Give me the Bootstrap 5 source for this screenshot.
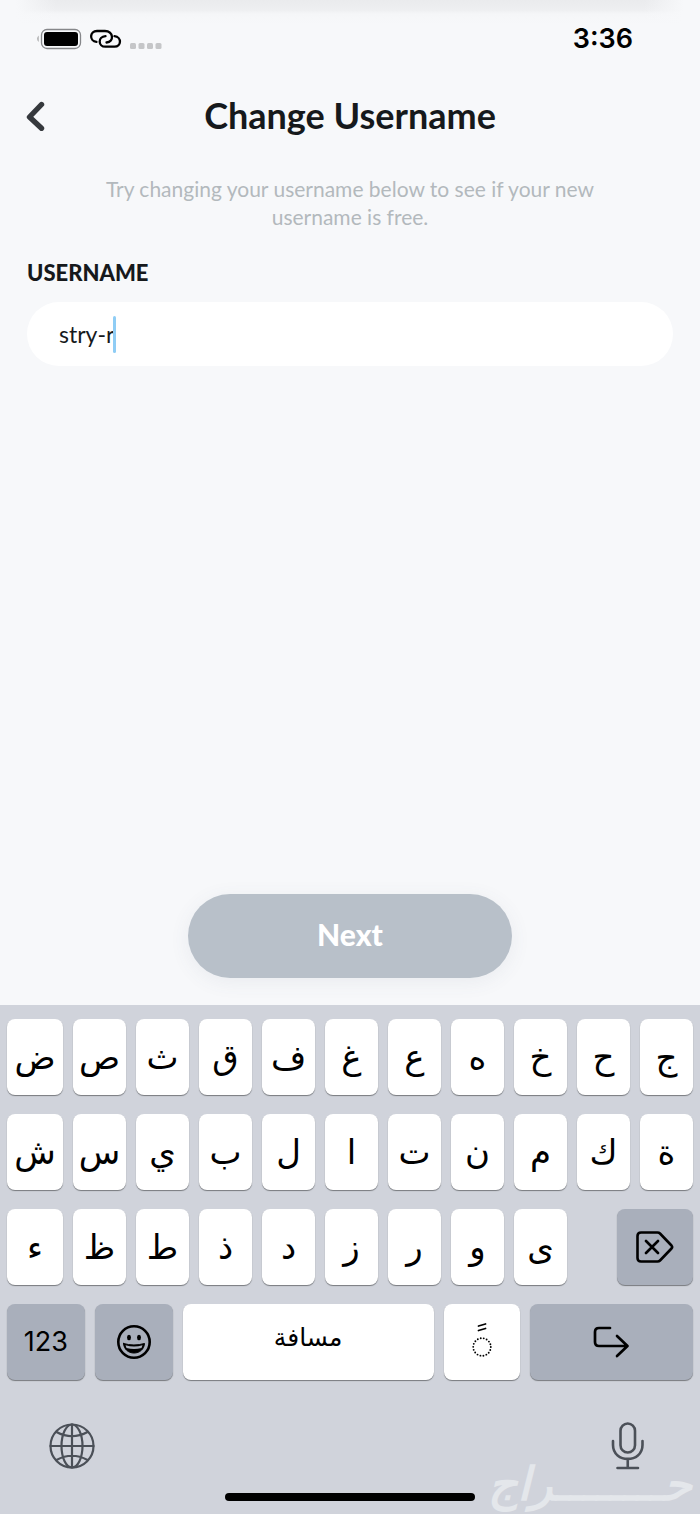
<!DOCTYPE html>
<html lang="en">
<head>
<meta charset="utf-8">
<meta name="viewport" content="width=device-width, initial-scale=1">
<title>Change Username</title>
<link href="https://cdn.jsdelivr.net/npm/bootstrap@5.3.0/dist/css/bootstrap.min.css" rel="stylesheet">
<style>
  body { background: #f7f8fa; color: #16191c; font-family: Lato, "Liberation Sans", sans-serif; }
  svg { display: block; fill: none; stroke: currentColor; stroke-linecap: round; stroke-linejoin: round; }
  .status-bar { height: 76px; padding: 2px 67px 0 36px; color: #000; background: linear-gradient(90deg, #f7f8fa 16px, transparent 56px, transparent calc(100% - 56px), #f7f8fa calc(100% - 16px)), linear-gradient(#eaebed 0, #eeeff1 10px, #f5f6f8 14px, #f7f8fa 24px); }
  .clock { font: 600 27px/32px Inter, sans-serif; }
  .title-bar { height: 80px; padding: 0 24px 2px; }
  .title-bar h1 { font-size: 36px; line-height: 40px; font-weight: 700; }
  .back-btn { left: 24px; color: #36393d; }
  .hint { padding: 19px 90px 0; font-size: 21px; line-height: 28px; color: #b3b9bd; }
  .field { padding: 28px 27px 0; }
  .field label { margin-bottom: 15px; font-size: 22px; line-height: 28px; font-weight: 900; }
  .field input, .field input:focus { height: 64px; padding: 0 32px; border: 0; border-radius: 32px; background: #fff; color: #16191c; font-size: 23px; box-shadow: none; }
  .caret { left: 86px; top: 14px; width: 3px; height: 37px; border-radius: 2px; background: #8fcdf5; }
  .next-btn, .next-btn:disabled { width: 46.3%; height: 84px; padding: 0 0 4px; margin-bottom: 27px; border: 0; border-radius: 42px; background: #b8c0c9; color: #fff; opacity: 1; font-size: 30px; font-weight: 900; box-shadow: 0 4px 20px rgba(80,95,110,.08); }
  .keyboard { padding: 14px 7px 13px; background: #d0d3db; color: #000; }
  .keys { display: grid; grid-template-columns: 56fr repeat(10, 53fr); gap: 19px 10px; }
  .keys-last { grid-template-columns: 78fr 78fr 252fr 76fr 164fr; margin-top: 19px; }
  .key { height: 76px; min-width: 0; padding: 0; border: 0; border-radius: 8px; background: #fff; color: #000; box-shadow: 0 1px 1px #77797e; font: 34px/40px "DejaVu Sans", sans-serif; display: flex; align-items: center; justify-content: center; }
  .key-dark { background: #a9afbb; font: 27px/32px Inter, sans-serif; }
  .key-delete { grid-column: 10 / span 2; justify-self: end; width: 76px; }
  .key-space { padding-bottom: 8px; font-size: 25px; }
  .tools { padding: 42px 42px 0; color: #4b5058; }
  .tools button { color: inherit; }
  .home-bar { width: 250px; height: 8px; border-radius: 4px; background: #000; margin-top: 23px; }
  .watermark { right: 8px; bottom: 4px; font: italic 700 46px/52px "DejaVu Sans", sans-serif; color: #e4e7eb; pointer-events: none; }
</style>
</head>
<body>
<div class="min-vh-100 d-flex flex-column">
  <header>
    <div class="status-bar d-flex align-items-center justify-content-between">
      <div class="d-flex align-items-center">
        <svg width="128" height="28" viewBox="0 0 128 28" role="img" aria-label="Battery full, hotspot on, no signal">
          <path d="M2.500 10.500c-1.500 1.500-1.500 5 0 6.500z" fill="#8c8c8c" stroke="none"/>
          <rect x="5.500" y="4.500" width="39" height="19" rx="5.500" stroke="#86878a" stroke-width="1.300"/>
          <rect x="8" y="7" width="34" height="14" rx="3" fill="#000" stroke="none"/>
          <g stroke-width="2.300">
            <path d="M60.500 16.800C53 16 53.500 6 61 6H69C77.500 6 78.500 17 70.500 17.500"/>
            <path d="M78.500 11.200C86 12 85.500 21.700 78.500 21.700H69.500C62 21.700 61.500 11.800 69.500 11.200"/>
          </g>
          <g fill="#c5c6c8" stroke="none"><rect x="94" y="18" width="6" height="6" rx="1.500"/><rect x="102.500" y="18" width="6" height="6" rx="1.500"/><rect x="111" y="18" width="6" height="6" rx="1.500"/><rect x="119.500" y="18" width="6" height="6" rx="1.500"/></g>
        </svg>
      </div>
      <time class="clock">3:36</time>
    </div>
    <div class="title-bar position-relative d-flex align-items-center justify-content-center">
      <button type="button" class="back-btn btn p-0 border-0 position-absolute" aria-label="Back">
        <svg width="24" height="32" viewBox="0 0 24 32" stroke-width="5.400"><path d="M17.500 5.500L5.500 18L17.500 29.300"/></svg>
      </button>
      <h1 class="m-0">Change Username</h1>
    </div>
  </header>
  <main class="flex-grow-1 d-flex flex-column">
    <p class="hint text-center m-0">Try changing your username below to see if your new username is free.</p>
    <div class="field">
      <label for="username" class="d-block">USERNAME</label>
      <div class="position-relative">
        <input id="username" class="form-control" type="text" value="stry-r" autocomplete="off">
        <span class="caret position-absolute" aria-hidden="true"></span>
      </div>
    </div>
    <button type="button" class="next-btn btn mt-auto mx-auto" disabled>Next</button>
  </main>
  <footer class="keyboard position-relative">
    <div class="keys" lang="ar">
      <button class="key">ض</button><button class="key">ص</button><button class="key">ث</button><button class="key">ق</button><button class="key">ف</button><button class="key">غ</button><button class="key">ع</button><button class="key">ه</button><button class="key">خ</button><button class="key">ح</button><button class="key">ج</button>
      <button class="key">ش</button><button class="key">س</button><button class="key">ي</button><button class="key">ب</button><button class="key">ل</button><button class="key">ا</button><button class="key">ت</button><button class="key">ن</button><button class="key">م</button><button class="key">ك</button><button class="key">ة</button>
      <button class="key">ء</button><button class="key">ظ</button><button class="key">ط</button><button class="key">ذ</button><button class="key">د</button><button class="key">ز</button><button class="key">ر</button><button class="key">و</button><button class="key">ى</button>
      <button class="key key-dark key-delete" aria-label="Delete">
        <svg width="38" height="32" viewBox="0 0 38 32" stroke-width="2.600"><path d="M5 1.500H21.500Q23 1.500 24 2.500L35.500 14.500Q36.800 16 35.500 17.500L24 29.500Q23 30.500 21.500 30.500H5Q1.500 30.500 1.500 27V5Q1.500 1.500 5 1.500ZM10 10L22 22M22 10L10 22"/></svg>
      </button>
    </div>
    <div class="keys keys-last">
      <button class="key key-dark">123</button>
      <button class="key key-dark" aria-label="Emoji">
        <svg width="36" height="36" viewBox="0 0 36 36"><circle cx="18" cy="18" r="15.700" stroke-width="2.600"/><ellipse cx="13" cy="13.500" rx="2" ry="2.700" fill="currentColor" stroke="none"/><ellipse cx="23" cy="13.500" rx="2" ry="2.700" fill="currentColor" stroke="none"/><path d="M7.500 19.500Q18 22.500 28.500 19.500C28 25.500 23.500 29 18 29S8 25.500 7.500 19.500Z" fill="currentColor" stroke-width="1"/><path d="M9.500 21.300Q18 23.800 26.500 21.300L25.500 24Q18 26 10.500 24Z" fill="#a9afbb" stroke="none"/></svg>
      </button>
      <button class="key key-space" lang="ar">مسافة</button>
      <button class="key" lang="ar" aria-label="Diacritics">
        <svg width="24" height="44" viewBox="0 0 24 44"><path d="M8.500 6L15.500 4M8.500 10.500L15.500 8.500" stroke-width="1.800"/><circle cx="12" cy="27" r="8.800" stroke-width="1.900" stroke-dasharray="0 3.070"/></svg>
      </button>
      <button class="key key-dark" aria-label="Return">
        <svg width="38" height="34" viewBox="0 0 38 34" stroke-width="2.700"><path d="M18 3H7Q3 3 3 7V17Q3 21 7 21H35M25 11L35.500 21L25 31"/></svg>
      </button>
    </div>
    <div class="tools d-flex justify-content-between align-items-center">
      <button type="button" class="btn p-0 border-0" aria-label="Next keyboard">
        <svg width="46" height="48" viewBox="0 0 46 48" stroke-width="2.200"><circle cx="23" cy="24" r="21.500"/><ellipse cx="23" cy="24" rx="10.500" ry="21.500"/><path d="M23 2.500V45.500M1.500 24H44.500M7.500 10Q23 18.500 38.500 10M7.500 38Q23 29.500 38.500 38"/></svg>
      </button>
      <button type="button" class="btn p-0 border-0" aria-label="Dictate">
        <svg width="46" height="48" viewBox="0 0 46 48" stroke-width="2.600"><rect x="15.500" y="1.500" width="14.500" height="29" rx="7.250"/><path d="M8 19V23C8 41.500 37.500 41.500 37.500 23V19M22.750 37V46M12.500 46H33"/></svg>
      </button>
    </div>
    <div class="home-bar mx-auto"></div>
    <span class="watermark position-absolute" lang="ar">حــــــــراج</span>
  </footer>
</div>
<script src="https://cdn.jsdelivr.net/npm/bootstrap@5.3.0/dist/js/bootstrap.bundle.min.js"></script>
</body>
</html>
